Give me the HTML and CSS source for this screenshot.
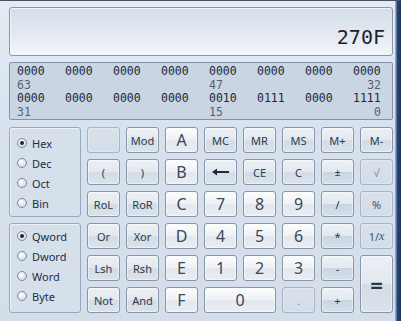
FILE: index.html
```html
<!DOCTYPE html>
<html>
<head>
	<title>Calculator</title>
	<link rel="stylesheet" href="styles.css">
</head>
<body>
<div class="window">
	<div class="calc">

		<div class="display"><span class="value">270F</span></div>

		<div class="bits">
			<div class="row">
				<span>0000</span><span>0000</span><span>0000</span><span>0000</span>
				<span>0000</span><span>0000</span><span>0000</span><span>0000</span>
			</div>
			<div class="row labels">
				<span class="hi">63</span><span class="mid">47</span><span class="lo">32</span>
			</div>
			<div class="row">
				<span>0000</span><span>0000</span><span>0000</span><span>0000</span>
				<span>0010</span><span>0111</span><span>0000</span><span>1111</span>
			</div>
			<div class="row labels">
				<span class="hi">31</span><span class="mid">15</span><span class="lo">0</span>
			</div>
		</div>

		<div class="keys">
			<div class="group base">
				<div class="radio checked"><span class="dot"></span>Hex</div>
				<div class="radio"><span class="dot"></span>Dec</div>
				<div class="radio"><span class="dot"></span>Oct</div>
				<div class="radio"><span class="dot"></span>Bin</div>
			</div>
			<div class="group size">
				<div class="radio checked"><span class="dot"></span>Qword</div>
				<div class="radio"><span class="dot"></span>Dword</div>
				<div class="radio"><span class="dot"></span>Word</div>
				<div class="radio"><span class="dot"></span>Byte</div>
			</div>

			<!-- row 1 -->
			<div class="key off"></div>
			<div class="key">Mod</div>
			<div class="key num">A</div>
			<div class="key">MC</div>
			<div class="key">MR</div>
			<div class="key">MS</div>
			<div class="key">M+</div>
			<div class="key">M-</div>

			<!-- row 2 -->
			<div class="key">(</div>
			<div class="key">)</div>
			<div class="key num">B</div>
			<div class="key"><svg width="17" height="8" viewBox="0 0 17 8"><path d="M17 4H3" stroke="#1f2b3a" stroke-width="2"/><path d="M0 4L5 0.5V7.5Z" fill="#1f2b3a"/></svg></div>
			<div class="key">CE</div>
			<div class="key">C</div>
			<div class="key op small">&plusmn;</div>
			<div class="key off">&radic;</div>

			<!-- row 3 -->
			<div class="key">RoL</div>
			<div class="key">RoR</div>
			<div class="key num">C</div>
			<div class="key num">7</div>
			<div class="key num">8</div>
			<div class="key num">9</div>
			<div class="key op">/</div>
			<div class="key off dim">%</div>

			<!-- row 4 -->
			<div class="key">Or</div>
			<div class="key">Xor</div>
			<div class="key num">D</div>
			<div class="key num">4</div>
			<div class="key num">5</div>
			<div class="key num">6</div>
			<div class="key op">*</div>
			<div class="key off dim">1/<i>x</i></div>

			<!-- row 5 -->
			<div class="key">Lsh</div>
			<div class="key">Rsh</div>
			<div class="key num">E</div>
			<div class="key num">1</div>
			<div class="key num">2</div>
			<div class="key num">3</div>
			<div class="key op">-</div>
			<div class="key equals">=</div>

			<!-- row 6 -->
			<div class="key">Not</div>
			<div class="key">And</div>
			<div class="key num">F</div>
			<div class="key num zero">0</div>
			<div class="key off">.</div>
			<div class="key op">+</div>
		</div>

	</div>
	<div class="edge"></div>
</div>
</body>
</html>
```

FILE: styles.css
```css
/* Reset */

* { margin: 0; padding: 0; box-sizing: border-box; }

body {
	background-color: #d9e3ef;
	font-family: "Noto Sans", sans-serif;
	font-size: 11px;
	color: #1b2c4a;
}


/* Window */

.window {
	display: flex;
	width: 401px;
	height: 321px;
	border-top: solid 1px #4a5260;
	background: linear-gradient(to bottom, #e4ebf4, #d8e2ee 40%, #d3deea);
	overflow: hidden;
}

.calc {
	display: flex;
	flex-direction: column;
	width: 395px;
	padding: 6px 2px 0 9px;
}

.edge {
	flex: 1;
	background: linear-gradient(to right, #8fa6c4 0, #8fa6c4 1px, #2a4676 2px, #1c3464);
}


/* Display */

.display {
	display: flex;
	justify-content: flex-end;
	align-items: flex-end;
	height: 49px;
	padding: 0 7px 8px 0;
	border: solid 1px #8597ad;
	border-radius: 3px;
	background: linear-gradient(to bottom, #d5dee9, #e3e9f1 55%, #f3f6f9);
	box-shadow: inset 1px 1px 0 rgba(255, 255, 255, 0.6);
}

.display .value {
	font-family: "DejaVu Sans Mono", monospace;
	font-size: 20px;
	line-height: 20px;
	color: #1c232c;
}


/* Binary panel */

.bits {
	margin-top: 6px;
	height: 58px;
	padding: 2px 0 0 7px;
	border: solid 1px #8193a9;
	border-radius: 2px;
	background-color: #c9d5e2;
	font-family: "DejaVu Sans Mono", monospace;
	font-size: 11.5px;
	line-height: 13.5px;
	color: #1f2833;
}

.bits .row {
	display: grid;
	grid-template-columns: repeat(8, 28px);
	column-gap: 20px;
	height: 13.5px;
}

.bits .labels {
	color: #56616e;
}

.bits .hi { grid-column: 1; }
.bits .mid { grid-column: 5; }
.bits .lo { grid-column: 8; text-align: right; }


/* Keys */

.keys {
	display: grid;
	grid-template-columns: 72px repeat(8, 33px);
	grid-template-rows: repeat(6, 26px);
	gap: 6px;
	margin-top: 7px;
}

.group {
	grid-column: 1;
	padding-left: 7px;
	border: solid 1px #98a9bd;
	border-radius: 3px;
	background-color: #d6e0eb;
	box-shadow: inset 1px 1px 0 rgba(255, 255, 255, 0.55);
}

.group.base {
	grid-row: 1 / 4;
	padding-top: 5px;
}

.group.size {
	grid-row: 4 / 7;
	padding-top: 2px;
}

.radio {
	display: flex;
	align-items: center;
	gap: 5px;
	height: 20px;
}

.radio .dot {
	display: flex;
	align-items: center;
	justify-content: center;
	width: 10px;
	height: 10px;
	border: solid 1px #7e8b9a;
	border-radius: 50%;
	background: radial-gradient(circle at 40% 35%, #ffffff, #c6cfd9);
}

.radio.checked .dot:after {
	content: "";
	width: 4px;
	height: 4px;
	border-radius: 50%;
	background-color: #1d2733;
}

.key {
	display: flex;
	align-items: center;
	justify-content: center;
	border: solid 1px #8796a8;
	border-radius: 3px;
	background: linear-gradient(to bottom, #edf1f6 0%, #e2e8ef 48%, #d4dce6 52%, #dbe2eb 100%);
	box-shadow: inset 0 0 0 1px rgba(255, 255, 255, 0.45);
	color: #2c3a4c;
	font-size: 11px;
}

.key.num {
	background: linear-gradient(to bottom, #fbfcfd 0%, #eff2f6 48%, #e2e8ef 52%, #e9eef3 100%);
	font-size: 16px;
	color: #3a4756;
}

.key.op {
	background: linear-gradient(to bottom, #eef2f6 0%, #e3e9ef 48%, #ccd6e1 52%, #d6dee8 100%);
}

.key.small {
	font-size: 10px;
}

.key.off {
	border-color: #a6b4c5;
	background: linear-gradient(to bottom, #d9e2ec, #d3dce7);
	box-shadow: inset 0 0 0 1px rgba(255, 255, 255, 0.25);
	color: #6f7c8c;
}

.key.dim {
	color: #46525f;
}

.key i {
	font-family: "Liberation Serif", serif;
	font-size: 12px;
}

.key.zero {
	grid-column: span 2;
}

.key.equals {
	grid-row: span 2;
	font-size: 22px;
	font-weight: bold;
	color: #2a3646;
}
```
